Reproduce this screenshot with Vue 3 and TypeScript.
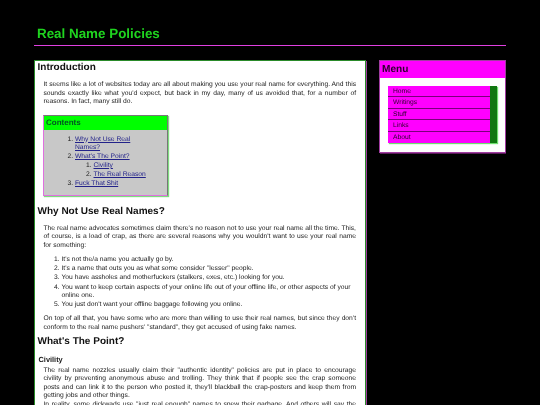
<script setup lang="ts">
const menu: string[] = ['Home', 'Writings', 'Stuff', 'Links', 'About']
</script>

<template>
  <div class="page">
    <h1 class="title">Real Name Policies</h1>
    <div class="columns">
      <main class="content">
        <h2 class="h2 first">Introduction</h2>
        <p>It seems like a lot of websites today are all about making you use your real name for everything. And this sounds exactly like what you'd expect, but back in my day, many of us avoided that, for a number of reasons. In fact, many still do.</p>
        <div class="toc">
          <div class="toc-head">Contents</div>
          <ol class="toc-list">
            <li><a href="#">Why Not Use Real Names?</a></li>
            <li><a href="#">What's The Point?</a>
              <ol>
                <li><a href="#">Civility</a></li>
                <li><a href="#">The Real Reason</a></li>
              </ol>
            </li>
            <li><a href="#">Fuck That Shit</a></li>
          </ol>
        </div>
        <h2 class="h2 why">Why Not Use Real Names?</h2>
        <p>The real name advocates sometimes claim there's no reason not to use your real name all the time. This, of course, is a load of crap, as there are several reasons why you wouldn't want to use your real name for something:</p>
        <ol class="reasons">
          <li>It's not the/a name you actually go by.</li>
          <li>It's a name that outs you as what some consider "lesser" people.</li>
          <li>You have assholes and motherfuckers (stalkers, exes, etc.) looking for you.</li>
          <li>You want to keep certain aspects of your online life out of your offline life, or other aspects of your online one.</li>
          <li>You just don't want your offline baggage following you online.</li>
        </ol>
        <p class="tail">On top of all that, you have some who are more than willing to use their real names, but since they don't conform to the real name pushers' "standard", they get accused of using fake names.</p>
        <h2 class="h2 point">What's The Point?</h2>
        <h3 class="h3">Civility</h3>
        <p class="civ">The real name nozzles usually claim their "authentic identity" policies are put in place to encourage civility by preventing anonymous abuse and trolling. They think that if people see the crap someone posts and can link it to the person who posted it, they'll blackball the crap-posters and keep them from getting jobs and other things.</p>
        <p>In reality, some dickwads use "just real enough" names to spew their garbage. And others will say the same things under their real names.</p>
      </main>
      <aside class="side">
        <div class="side-head">Menu</div>
        <div class="side-body">
          <ul class="menu">
            <li v-for="item in menu" :key="item">{{ item }}</li>
          </ul>
        </div>
      </aside>
    </div>
  </div>
</template>

<style>
html, body { margin: 0; background: #000; overflow: hidden; height: 405px; }
</style>

<style scoped>
.page {
  width: 472px;
  height: 405px;
  margin-left: 34px;
  overflow: hidden;
  font-family: "Liberation Sans", Arial, sans-serif;
  font-size: 6.72px;
  line-height: 8.5px;
  color: #1a1a1a;
  text-rendering: geometricPrecision;
  filter: blur(0.3px);
}
.title {
  margin: 0;
  padding: 27px 3px 4px;
  font-size: 13.4px;
  line-height: 14px;
  font-weight: 700;
  color: #1fd41f;
  border-bottom: 1px solid #e040e0;
}
.columns {
  display: flex;
  align-items: flex-start;
  gap: 13px;
  margin-top: 14px;
}
.content {
  flex: 0 0 332px;
  box-sizing: border-box;
  background: #fff;
  border: 1px solid #2a8a2a;
  padding: 1px 9px 0 2.5px;
  box-shadow: 1px 1px 0 #a03ca0;
}
.content p {
  margin: 0 0 6.3px 6px;
  text-align: justify;
}
.content p.tail { margin-bottom: 3.7px; }
.content p.civ { margin-bottom: 0; }
.h2 {
  margin: 0 0 7px;
  font-size: 10px;
  line-height: 12px;
  font-weight: 700;
  color: #111;
}
.h2.why { margin-top: 10px; }
.h2.point { margin-top: 0; margin-bottom: 7px; }
.h3 {
  margin: 0 0 2px 1px;
  font-size: 7.4px;
  line-height: 10px;
  font-weight: 700;
  color: #222;
}
.toc {
  width: 125px;
  box-sizing: border-box;
  margin: 8px 0 0 5.5px;
  background: #c8c8c8;
  border: 1px solid #e070e0;
  border-top-color: #777;
  border-right-color: #777;
  box-shadow: 1px 1px 1px #7fdc7f;
}
.toc-head {
  background: #00ff00;
  height: 14px;
  padding-left: 2px;
  font-size: 8px;
  line-height: 14px;
  font-weight: 700;
  color: #052;
}
.toc-list {
  margin: 0;
  padding: 6px 18px 6px 31px;
}
.toc-list li { margin-bottom: 0.4px; }
.toc-list ol {
  margin: 0.5px 0 0;
  padding-left: 18.5px;
}
.toc-list a { color: #22228a; text-decoration: underline; }
.reasons {
  margin: 1.5px 0 5.5px 6px;
  padding-left: 18px;
}
.reasons li { margin-bottom: 0.55px; }
.side {
  flex: 0 0 127px;
  box-sizing: border-box;
  background: #fff;
  border: 1px solid #a03ca0;
  box-shadow: 1px 1px 0 #5a1a5a;
}
.side-head {
  background: #ff00ff;
  height: 17px;
  padding-left: 2px;
  font-size: 10.1px;
  line-height: 17px;
  font-weight: 700;
  color: #300030;
}
.side-body { padding: 8px 8px 9px 8px; }
.menu {
  list-style: none;
  margin: 0;
  padding: 0;
  background: #ff00ff;
  border-right: 7px solid #117711;
  box-shadow: 1px 1px 1px #6fe06f;
}
.menu li {
  height: 11.4px;
  box-sizing: border-box;
  padding-left: 5px;
  line-height: 11.4px;
  color: #300030;
  border-bottom: 1px solid #7a007a;
}
.menu li:last-child { border-bottom: 0; }
</style>
